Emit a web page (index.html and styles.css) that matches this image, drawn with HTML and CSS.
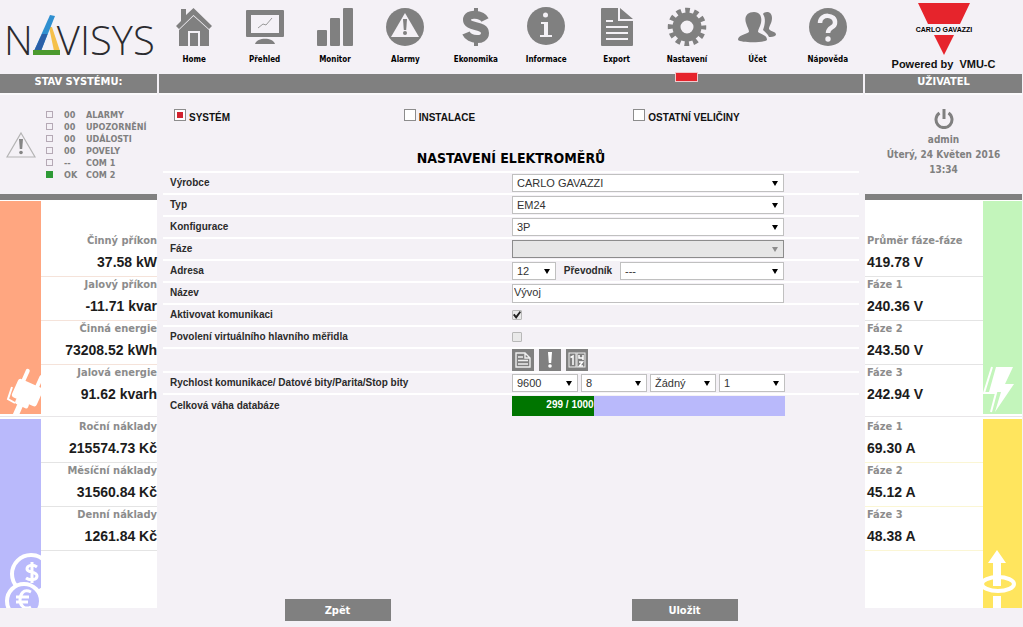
FILE: index.html
```html
<!DOCTYPE html>
<html lang="cs">
<head>
<meta charset="utf-8">
<title>Navisys – Nastavení elektroměrů</title>
<link rel="stylesheet" href="styles.css">
</head>
<body>
<div class="page">
  <aside class="side side-left">
    <div class="brand" aria-label="Navisys">
      <span>N</span>
      <svg class="brand-mark" viewBox="0 0 28 40" aria-hidden="true">
        <path d="M16 12 L19 12 L27 36 L21 36 Z" fill="#f5c04a"/>
        <path d="M17 0 L22 1 L8 36 L1 36 Z" fill="#2f8fd0"/>
        <path d="M9 19 L14.5 19 L8 36 L1 36 Z" fill="#2b5fa8"/>
        <rect x="0" y="35" width="27" height="5" fill="#4b9a2e"/>
      </svg>
      <span class="brand-tail">VISYS</span>
    </div>
    <h2 class="bar">STAV SYSTÉMU:</h2>
    <section class="status">
      <svg class="warn" viewBox="0 0 30 28" aria-hidden="true">
        <path d="M15 2 L29 26 H1 Z" fill="none" stroke="#b4b4b4" stroke-width="1.2"/>
        <path d="M13 8 H17 L16.2 18 H13.8 Z" fill="#858585"/><circle cx="15" cy="21.5" r="1.8" fill="#858585"/>
      </svg>
      <ul class="status-list">
        <li><i class="lamp"></i><b>00</b><span>ALARMY</span></li>
        <li><i class="lamp"></i><b>00</b><span>UPOZORNĚNÍ</span></li>
        <li><i class="lamp"></i><b>00</b><span>UDÁLOSTI</span></li>
        <li><i class="lamp"></i><b>00</b><span>POVELY</span></li>
        <li><i class="lamp"></i><b>--</b><span>COM 1</span></li>
        <li><i class="lamp lamp-on"></i><b>OK</b><span>COM 2</span></li>
      </ul>
    </section>
    <section class="meters meters-tall orange">
      <div class="strip">
        <svg viewBox="0 0 41 46" aria-hidden="true"><g transform="rotate(24 26 24)" fill="#fff"><rect x="14" y="14" width="27" height="20" rx="3"/><rect x="17" y="2" width="4" height="14" rx="2"/><rect x="32" y="2" width="4" height="14" rx="2"/><rect x="20" y="33" width="14" height="6" rx="2"/><rect x="23" y="37" width="6" height="14"/></g><path d="M12 19 L8 31 L15 35" fill="none" stroke="#fff" stroke-width="2"/></svg>
      </div>
      <dl>
        <div><dt>Činný příkon</dt><dd>37.58 kW</dd></div>
        <div><dt>Jalový příkon</dt><dd>-11.71 kvar</dd></div>
        <div><dt>Činná energie</dt><dd>73208.52 kWh</dd></div>
        <div><dt>Jalová energie</dt><dd>91.62 kvarh</dd></div>
      </dl>
    </section>
    <section class="meters violet">
      <div class="strip">
        <svg viewBox="0 0 41 56" aria-hidden="true"><g fill="none" stroke="#fff"><circle cx="31" cy="22" r="19" stroke-width="4"/><path d="M37 15 C33 12 27 13 27 17 C27 21 37 19 37 24 C37 28 30 29 26 26 M32 10 V31" stroke-width="3"/><circle cx="24" cy="49" r="17" fill="#b9b9fb" stroke-width="4"/><path d="M31 40 C23 36 20 43 20 48 C20 54 25 58 31 55 M16 45 H29 M16 50 H28" stroke-width="3"/></g></svg>
      </div>
      <dl>
        <div><dt>Roční náklady</dt><dd>215574.73 Kč</dd></div>
        <div><dt>Měsíční náklady</dt><dd>31560.84 Kč</dd></div>
        <div><dt>Denní náklady</dt><dd>1261.84 Kč</dd></div>
      </dl>
    </section>
  </aside>

  <main class="center">
    <nav class="nav">
      <a href="#"><svg viewBox="0 0 40 40" aria-hidden="true"><path d="M7 3 H12 V9 L19.500 2 L38 20 L35 23 L19.500 9 L5 23 L2 20 L7 15 Z"/><path d="M5 24 L19.500 10 L35 24 V40 H26 V25 H14 V40 H5 Z"/><rect x="16" y="27" width="8" height="13"/></svg>Home</a>
      <a href="#"><svg viewBox="0 0 40 40" aria-hidden="true"><path fill-rule="evenodd" d="M2 4 H38 Q39 4 39 5 V30 Q39 31 38 31 H2 Q1 31 1 30 V5 Q1 4 2 4 Z M6 9 V27 H34 V9 Z"/><path d="M10 38 C12 31 28 31 30 38 Z"/><path d="M13 22 L18 18 L21 19 L27 12" fill="none" stroke="#999"/></svg>Přehled</a>
      <a href="#"><svg viewBox="0 0 40 40" aria-hidden="true"><rect x="2" y="24" width="10" height="16" rx="1"/><rect x="15" y="12" width="10" height="28" rx="1"/><rect x="28" y="2" width="10" height="38" rx="1"/></svg>Monitor</a>
      <a href="#"><svg viewBox="0 0 40 40" aria-hidden="true"><circle cx="20" cy="21" r="19"/><path d="M20 7 L34 31 H6 Z" fill="#f4f1f6"/><path d="M18 13 H22 L21.200 24 H18.800 Z"/><circle cx="20" cy="27" r="2"/></svg>Alarmy</a>
      <a href="#"><svg viewBox="0 0 40 40" aria-hidden="true"><path d="M29 14 C26 8 11 6 11 14 C11 22 29 18 29 27 C29 36 13 34 10 27" fill="none" stroke="#808080" stroke-width="8"/><path d="M18 2 H22 V9 H18 Z M18 32 H22 V40 H18 Z"/></svg>Ekonomika</a>
      <a href="#"><svg viewBox="0 0 40 40" aria-hidden="true"><circle cx="20" cy="20" r="19"/><g fill="#f4f1f6"><circle cx="19.500" cy="9" r="2.500"/><path d="M15 16 H22 V29 H26 V31 H14 V29 H18 V18 H15 Z"/></g></svg>Informace</a>
      <a href="#"><svg viewBox="0 0 40 40" aria-hidden="true"><path d="M5 2 H21 V15 H36 V39 Q36 40 35 40 H5 Q4 40 4 39 V3 Q4 2 5 2 Z M23 2 L36 13 H23 Z"/><path d="M9 15 H16 M9 21 H31 M9 27 H31 M9 33 H31" stroke="#f4f1f6" stroke-width="2"/></svg>Export</a>
      <a href="#" class="active" aria-current="page"><svg viewBox="0 0 40 40" aria-hidden="true"><circle cx="20" cy="21" r="10.500" fill="none" stroke="#808080" stroke-width="8"/><circle cx="20" cy="21" r="16.500" fill="none" stroke="#808080" stroke-width="5.500" stroke-dasharray="4.640 4" stroke-dashoffset="2.300"/></svg>Nastavení</a>
      <a href="#"><svg viewBox="0 0 40 40" aria-hidden="true"><path d="M26 8 C28 5 35 5 35 12 C35 17 32 20 32 23 C34 26 39 25 39 29 C37 31 34 31 32 31 C31 28 28 26 26 24 C28 19 29 12 26 8 Z"/><path d="M17 6 C24 6 25 12 24 17 C23 21 21 23 21 26 C25 29 30 29 30 34 C27 37 4 37 1 34 C1 29 8 29 12 26 C12 23 10 21 9 17 C7 11 10 6 17 6 Z"/></svg>Účet</a>
      <a href="#"><svg viewBox="0 0 40 40" aria-hidden="true"><circle cx="20" cy="21" r="19"/><path d="M12 17 C12 7 28 8 27 17 C27 22 20 21 20 27" fill="none" stroke="#f4f1f6" stroke-width="4.500"/><circle cx="20" cy="33" r="2.700" fill="#f4f1f6"/></svg>Nápověda</a>
    </nav>
    <div class="bar"></div>

    <form class="settings">
      <div class="tabs">
        <label><input type="radio" name="tab" checked> SYSTÉM</label>
        <label><input type="radio" name="tab"> INSTALACE</label>
        <label><input type="radio" name="tab"> OSTATNÍ VELIČINY</label>
      </div>
      <h1>NASTAVENÍ ELEKTROMĚRŮ</h1>
      <div class="rows">
        <div class="row"><label for="maker">Výrobce</label><div class="field"><span class="select wide"><select id="maker"><option>CARLO GAVAZZI</option></select></span></div></div>
        <div class="row"><label for="type">Typ</label><div class="field"><span class="select wide"><select id="type"><option>EM24</option></select></span></div></div>
        <div class="row"><label for="conf">Konfigurace</label><div class="field"><span class="select wide"><select id="conf"><option>3P</option></select></span></div></div>
        <div class="row"><label for="phase">Fáze</label><div class="field"><span class="select wide off"><select id="phase" disabled><option></option></select></span></div></div>
        <div class="row"><label for="addr">Adresa</label><div class="field"><span class="select addr"><select id="addr"><option>12</option></select></span><label class="inner" for="conv">Převodník</label><span class="select conv"><select id="conv"><option>---</option></select></span></div></div>
        <div class="row"><label for="name">Název</label><div class="field"><input class="text wide" id="name" type="text" value="Vývoj"></div></div>
        <div class="row"><label for="comm">Aktivovat komunikaci</label><div class="field"><input class="check" id="comm" type="checkbox" checked></div></div>
        <div class="row"><label for="virt">Povolení virtuálního hlavního měřidla</label><div class="field"><input class="check" id="virt" type="checkbox"></div></div>
        <div class="row row-tools"><span></span><div class="field tools">
          <button type="button" aria-label="Dokument"><svg viewBox="0 0 22 22"><path d="M4 4 H13 L18 9 V18 H4 Z M13 4 V9 H18 M6 8 H11 M6 11.500 H16 M6 15 H16" fill="none" stroke="#eee" stroke-width="1.400"/></svg></button>
          <button type="button" aria-label="Alarm"><svg viewBox="0 0 22 22"><path d="M9 3 H13 L12.200 14 H9.800 Z" fill="#fff"/><circle cx="11" cy="17" r="1.800" fill="#fff"/></svg></button>
          <button type="button" aria-label="Počítadlo"><svg viewBox="0 0 22 22"><g fill="none" stroke="#eee"><rect x="3" y="4" width="7" height="14"/><rect x="11" y="4" width="8" height="14"/></g><path d="M4.500 8.500 L7 7 V16 M13 6 V9 H17 M17 6 V11 M13 13 H16.500 L13.500 17 H17" fill="none" stroke="#fff" stroke-width="1.500"/></svg></button>
        </div></div>
        <div class="row"><label for="baud">Rychlost komunikace/ Datové bity/Parita/Stop bity</label><div class="field four">
          <span class="select"><select id="baud"><option>9600</option></select></span>
          <span class="select"><select aria-label="Datové bity"><option>8</option></select></span>
          <span class="select"><select aria-label="Parita"><option>Žádný</option></select></span>
          <span class="select"><select aria-label="Stop bity"><option>1</option></select></span>
        </div></div>
        <div class="row row-last"><span id="weight">Celková váha databáze</span><div class="field"><div class="progress" role="progressbar" aria-labelledby="weight" aria-valuemin="0" aria-valuemax="1000" aria-valuenow="299"><div class="progress-fill" style="width:29.9%">299 / 1000</div></div></div></div>
      </div>
      <div class="actions">
        <button type="button">Zpět</button>
        <button type="submit">Uložit</button>
      </div>
    </form>
  </main>

  <aside class="side side-right">
    <div class="vendor">
      <svg viewBox="0 0 60 52" aria-hidden="true"><path d="M4 0 H56 L46 21 H14 Z M20 32 H40 L30 52 Z" fill="#e6242c"/><text x="30" y="29" text-anchor="middle" class="vendor-name">CARLO GAVAZZI</text></svg>
      <p>Powered by &nbsp;VMU-C</p>
    </div>
    <h2 class="bar">UŽIVATEL</h2>
    <section class="status user">
      <button type="button" aria-label="Odhlásit"><svg viewBox="0 0 20 20"><path d="M5.500 4 A8 8 0 1 0 14.500 4" fill="none" stroke="#808080" stroke-width="3"/><path d="M10 0 V10" stroke="#808080" stroke-width="3"/></svg></button>
      <span>admin</span>
      <span>Úterý, 24 Květen 2016</span>
      <span>13:34</span>
    </section>
    <section class="meters meters-tall green">
      <dl>
        <div><dt>Průměr fáze-fáze</dt><dd>419.78 V</dd></div>
        <div><dt>Fáze 1</dt><dd>240.36 V</dd></div>
        <div><dt>Fáze 2</dt><dd>243.50 V</dd></div>
        <div><dt>Fáze 3</dt><dd>242.94 V</dd></div>
      </dl>
      <div class="strip"><svg viewBox="0 0 39 48" aria-hidden="true"><path d="M13 1 H30 L22 18 H31 L12 46 L18 26 H6 Z" fill="#fff"/><path d="M9 1 L1 27 H13 L8 46" fill="none" stroke="#fff" stroke-width="2"/></svg></div>
    </section>
    <section class="meters yellow">
      <dl>
        <div><dt>Fáze 1</dt><dd>69.30 A</dd></div>
        <div><dt>Fáze 2</dt><dd>45.12 A</dd></div>
        <div><dt>Fáze 3</dt><dd>48.38 A</dd></div>
      </dl>
      <div class="strip"><svg viewBox="0 0 39 58" aria-hidden="true"><ellipse cx="15" cy="34" rx="16" ry="7" fill="none" stroke="#fff" stroke-width="4"/><path d="M14 0 L23 13 H18 V36 H10 V13 H5 Z M10 46 H18 V58 H10 Z" fill="#fff"/></svg></div>
    </section>
  </aside>
</div>
</body>
</html>
```
FILE: styles.css
```css
* { box-sizing: border-box; }

body {
  margin: 0;
  background: #f4f1f6;
  color: #111;
  font: 11px/14px "Liberation Sans", Arial, sans-serif;
}

h1, h2, p, ul, dl, dd { margin: 0; padding: 0; }
ul { list-style: none; }
svg { display: block; }
button { border: 0; padding: 0; cursor: pointer; }

.page {
  display: grid;
  grid-template-columns: 157px 1fr 157px;
  column-gap: 2px;
  min-height: 100vh;
  padding-right: 1px;
}

.bar {
  height: 21px;
  background: #808080;
  border-bottom: 2px solid #fbfafc;
  color: #fff;
  font: bold 11px/16px "DejaVu Sans Condensed", "DejaVu Sans", sans-serif;
  text-align: center;
}

/* Brand */
.brand {
  display: flex;
  height: 74px;
  padding-left: 4px;
  color: #2b2b2f;
  font: 300 40px/80px "Open Sans", sans-serif;
}
.brand-mark {
  width: 28px;
  height: 40px;
  margin-top: 15px;
}
.brand-tail { margin-left: -4px; }

.vendor {
  display: flex;
  flex-direction: column;
  align-items: center;
  height: 74px;
  padding-top: 3px;
  font-weight: bold;
}
.vendor svg { width: 60px; height: 52px; }
.vendor-name { font: bold 7px "Liberation Sans", Arial, sans-serif; }
.vendor p { margin-top: 2px; white-space: pre; }

/* Main navigation */
.nav {
  display: grid;
  grid-template-columns: repeat(10, 1fr);
  height: 74px;
}
.nav a {
  position: relative;
  display: flex;
  flex-direction: column;
  align-items: center;
  gap: 7px;
  padding-top: 6px;
  color: #000;
  font: bold 8px/14px "DejaVu Sans Condensed", "DejaVu Sans", sans-serif;
  text-decoration: none;
}
.nav svg { width: 40px; height: 40px; fill: #808080; }
.nav .active::after {
  content: "";
  position: absolute;
  bottom: -8px;
  width: 21px;
  height: 8px;
  background: #e6242c;
  border: 1px solid #f3c9cd;
}

/* Status panels */
.status {
  display: flex;
  align-items: center;
  gap: 10px;
  height: 105px;
  padding-left: 6px;
  border-bottom: 6px solid #808080;
  color: #808080;
  font: bold 9px/12px "DejaVu Sans Condensed", "DejaVu Sans", sans-serif;
}
.warn { width: 30px; height: 28px; }
.status-list li {
  display: grid;
  grid-template-columns: 18px 22px auto;
  align-items: center;
  height: 12px;
}
.status-list b { font-weight: bold; }
.lamp { width: 7px; height: 7px; border: 1px solid #b5a9b5; }
.lamp-on { background: #2e9a36; border-color: #2e9a36; }

.user {
  flex-direction: column;
  gap: 0;
  padding: 14px 0 0;
  font-size: 10px;
  line-height: 15px;
}
.user button { background: none; margin-bottom: 3px; }
.user svg { width: 20px; height: 20px; }

/* Meter columns */
.meters {
  display: flex;
  height: 191px;
  padding-top: 2px;
  background: #fff;
}
.meters-tall { height: 217px; padding: 1px 0 2px; border-bottom: 1px solid #e8e6e8; }
.meters dl { flex: 1; }
.meters-tall dl { padding-top: 32px; }
.meters dl div { height: 44px; border-bottom: 1px solid #e4e4e4; }
.meters-tall dl div:last-child { border-bottom: 0; }
.meters dt {
  color: #8c8c8c;
  font: bold 11px/16px "DejaVu Sans Condensed", "DejaVu Sans", sans-serif;
}
.meters dd { color: #1c1c1c; font-size: 14px; font-weight: bold; line-height: 27px; }
.side-left dl { text-align: right; }
.side-left dt, .side-left dd { white-space: nowrap; }
.side-right dt, .side-right dd { padding-left: 2px; white-space: nowrap; }

.strip { display: flex; align-items: flex-end; width: 41px; overflow: hidden; }
.side-right .strip { width: 39px; }
.strip svg { width: 100%; }
.orange .strip { background: #ffa680; }
.violet .strip { background: #b9b9fb; }
.green .strip { background: #c3f5bb; }
.yellow .strip { background: #ffe55e; }
.orange dl div { border-color: #f5e3da; }
.yellow dl div { border-color: #fbf6d4; }

/* Settings form */
.center { display: flex; flex-direction: column; }
.settings { display: flex; flex: 1; flex-direction: column; }
.tabs {
  display: grid;
  grid-template-columns: repeat(3, 1fr);
  padding: 14px 0 0 15px;
}
.tabs label {
  display: flex;
  align-items: center;
  gap: 3px;
  font-size: 10px;
  font-weight: bold;
  line-height: 16px;
}
.tabs input {
  appearance: none;
  width: 12px;
  height: 12px;
  margin: 0 0 5px;
  border: 1px solid #8c8c8c;
  background: #fff;
}
.tabs input:checked { background: #d2232f; box-shadow: inset 0 0 0 2px #fff; }

h1 {
  margin: 24px 0 5px;
  color: #000;
  font: bold 14px/16px "DejaVu Sans Condensed", "DejaVu Sans", sans-serif;
  text-align: center;
}

.rows { margin: 0 4px; border-top: 2px solid #fff; }
.row {
  display: grid;
  grid-template-columns: 1fr 1fr;
  align-items: center;
  height: 22px;
  border-bottom: 2px solid #fff;
  color: #2b2b2b;
  font-size: 10px;
  font-weight: bold;
}
.row > :first-child { padding-left: 7px; }
.row-tools { height: 24px; }
.row-last { border-bottom: 0; }
.field { display: flex; align-items: center; margin-left: 1px; }
.wide { width: 272px; }

.select { position: relative; display: block; }
.select::after {
  content: "";
  position: absolute;
  top: 7px;
  right: 6px;
  width: 6px;
  height: 5px;
  background: #000;
  clip-path: polygon(0 0, 100% 0, 50% 100%);
  pointer-events: none;
}
.select select {
  appearance: none;
  display: block;
  width: 100%;
  height: 18px;
  padding: 0 4px;
  border: 1px solid #c0c0c0;
  border-radius: 0;
  background: #fff;
  color: #333;
  font: 11px "Liberation Sans", Arial, sans-serif;
}
.off select { border-color: #8c8c8c; background: #e6e6e6; opacity: 1; }
.off::after { background: #8c8c8c; }
.addr { width: 44px; }
.conv { width: 164px; }
.inner { width: 64px; text-align: center; }

.text {
  height: 19px;
  padding: 0 1px 2px;
  border: 1px solid #c0c0c0;
  background: #fff;
  color: #333;
  font: 11px "Liberation Sans", Arial, sans-serif;
}

.check {
  appearance: none;
  position: relative;
  width: 10px;
  height: 10px;
  margin: 0;
  border: 1px solid #b8b8b8;
  border-radius: 1px;
  background: #e9e9e9;
}
.check:checked::after {
  content: "";
  position: absolute;
  inset: 0;
  background: #222;
  clip-path: polygon(0 50%, 20% 35%, 38% 58%, 85% 0, 100% 15%, 40% 100%);
}

.tools { gap: 5px; }
.tools button { width: 22px; height: 22px; background: #808080; }
.four { gap: 3px; width: 273px; }
.four .select { flex: 1; }

.progress { width: 273px; height: 20px; background: #b9b9fb; }
.progress-fill {
  height: 20px;
  background: #007500;
  color: #fff;
  line-height: 18px;
  text-align: right;
  white-space: nowrap;
}

.actions {
  display: grid;
  grid-template-columns: 1fr 1fr;
  justify-items: center;
  margin-top: auto;
  padding: 0 5px 6px;
}
.actions button {
  width: 106px;
  height: 22px;
  background: #808080;
  color: #fff;
  font: bold 11px "DejaVu Sans Condensed", "DejaVu Sans", sans-serif;
}
```
